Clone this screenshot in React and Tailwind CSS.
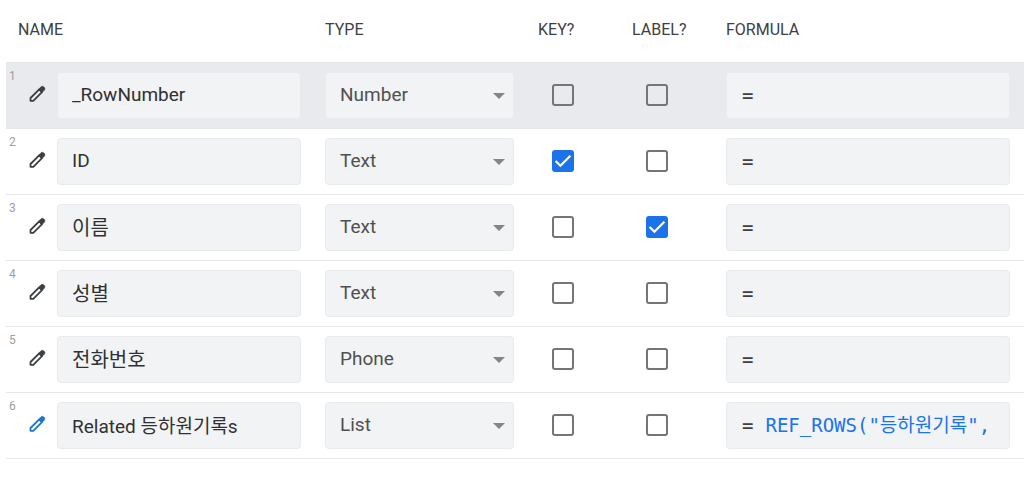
import { useState } from 'react';

const INITIAL_COLUMNS = [
  { id: 1, name: '_RowNumber', type: 'Number', key: false, label: false, formula: '' },
  { id: 2, name: 'ID', type: 'Text', key: true, label: false, formula: '' },
  { id: 3, name: '이름', type: 'Text', key: false, label: true, formula: '' },
  { id: 4, name: '성별', type: 'Text', key: false, label: false, formula: '' },
  { id: 5, name: '전화번호', type: 'Phone', key: false, label: false, formula: '' },
  { id: 6, name: 'Related 등하원기록s', type: 'List', key: false, label: false, formula: 'REF_ROWS("등하원기록",' },
];

const TYPES = ['Number', 'Text', 'Phone', 'List'];

// names written only in Hangul are set one step larger
const HANGUL_ONLY = /^[가-힣]+$/;

function PencilIcon() {
  return (
    <svg viewBox="0 0 20 20" className="size-5" fill="none" stroke="currentColor" strokeLinejoin="round">
      <path d="M3.5 14 L12.2 5.3 L15 8.1 L6.3 16.8 H3.5 Z" strokeWidth="1.8" />
      <path d="M11.4 5.4 L14.2 2.6 Q15.6 1.8 16.6 2.7 L17.5 3.6 Q18.4 4.6 17.6 6 L14.8 8.8 Z" fill="currentColor" strokeWidth="0.5" />
    </svg>
  );
}

function Checkbox({ label, checked, onChange }) {
  return (
    <div className="relative size-[22px]">
      <input
        type="checkbox"
        aria-label={label}
        checked={checked}
        onChange={onChange}
        className="block size-[22px] appearance-none rounded-[3px] border-2 border-[#757575] checked:border-[#1a73e8] checked:bg-[#1a73e8]"
      />
      {checked && (
        <svg viewBox="0 0 22 22" className="pointer-events-none absolute inset-0 size-[22px]" fill="none" stroke="#fff" strokeWidth="2.2">
          <path d="M3.6 11 L8.4 15.8 L18.4 5.8" />
        </svg>
      )}
    </div>
  );
}

function ColumnRow({ column, onChange }) {
  const isSystem = column.id === 1;
  const isVirtual = column.formula !== '';
  const nameSize = HANGUL_ONLY.test(column.name) ? 'text-[20px]' : 'text-[19px]';

  return (
    <tr className={`border-b border-[#e4e6e9] ${isSystem ? 'bg-[#e8eaed]' : ''}`}>
      <th scope="row" className="pt-[5px] pl-[3px] text-left align-top text-xs font-normal text-[#9e9e9e]">
        {column.id}
      </th>
      <td className="pt-2 pb-[10px]">
        <button
          type="button"
          aria-label={`Edit ${column.name}`}
          className={`block ${isVirtual ? 'text-[#1976d2]' : 'text-[#3c4043]'}`}
        >
          <PencilIcon />
        </button>
      </td>
      <td className="py-[9px] pr-6">
        <input
          type="text"
          aria-label="Column name"
          value={column.name}
          onChange={(e) => onChange({ name: e.target.value })}
          className={`block h-[47px] w-full rounded border border-[#e8eaed] bg-[#f1f3f4] px-[14px] pb-px text-[#303134] ${nameSize}`}
        />
      </td>
      <td className="py-[9px] pr-6">
        <div className="relative">
          <select
            aria-label={`Type of ${column.name}`}
            value={column.type}
            onChange={(e) => onChange({ type: e.target.value })}
            className="block h-[47px] w-full appearance-none rounded border border-[#e8eaed] bg-[#f1f3f4] px-[14px] text-[19px] text-[#505050]"
          >
            {TYPES.map((type) => (
              <option key={type}>{type}</option>
            ))}
          </select>
          <svg viewBox="0 0 12 6" className="pointer-events-none absolute top-[21px] right-[9px] h-[6px] w-3" fill="#80868b">
            <path d="M0 0 H12 L6 6 Z" />
          </svg>
        </div>
      </td>
      <td className="py-[9px] pl-[14px]">
        <Checkbox label={`${column.name} is key`} checked={column.key} onChange={(e) => onChange({ key: e.target.checked })} />
      </td>
      <td className="py-[9px] pl-[14px]">
        <Checkbox label={`${column.name} is label`} checked={column.label} onChange={(e) => onChange({ label: e.target.checked })} />
      </td>
      <td className="py-[9px] pr-[14px]">
        <div className="flex h-[47px] items-center gap-3 rounded border border-[#e8eaed] bg-[#f1f3f4] pr-2 pl-[15px] font-['DejaVu_Sans_Mono','Noto_Sans_CJK_KR',monospace] text-[19px] text-[#3c4043]">
          <label htmlFor={`formula-${column.id}`}>=</label>
          <input
            id={`formula-${column.id}`}
            type="text"
            value={column.formula}
            onChange={(e) => onChange({ formula: e.target.value })}
            className="w-full min-w-0 flex-1 text-[#1a73e8]"
          />
        </div>
      </td>
    </tr>
  );
}

export default function App() {
  const [columns, setColumns] = useState(INITIAL_COLUMNS);

  const updateColumn = (id, changes) => {
    setColumns(columns.map((c) => (c.id === id ? { ...c, ...changes } : c)));
  };

  return (
    <main className="min-h-screen bg-white pl-[6px] font-['Roboto','Noto_Sans_CJK_KR',sans-serif]">
      <table className="w-full table-fixed border-collapse">
        <colgroup>
          <col className="w-[21px]" />
          <col className="w-[30px]" />
          <col className="w-[268px]" />
          <col className="w-[213px]" />
          <col className="w-[94px]" />
          <col className="w-[94px]" />
          <col />
        </colgroup>
        <thead>
          <tr className="h-[62px] border-b border-[#e4e6e9] text-left text-base text-[#3c4043]">
            <th scope="col" colSpan={3} className="pb-[2px] pl-3 font-normal">NAME</th>
            <th scope="col" className="pb-[2px] font-normal">TYPE</th>
            <th scope="col" className="pb-[2px] font-normal">KEY?</th>
            <th scope="col" className="pb-[2px] font-normal">LABEL?</th>
            <th scope="col" className="pb-[2px] font-normal">FORMULA</th>
          </tr>
        </thead>
        <tbody>
          {columns.map((column) => (
            <ColumnRow key={column.id} column={column} onChange={(changes) => updateColumn(column.id, changes)} />
          ))}
        </tbody>
      </table>
    </main>
  );
}
